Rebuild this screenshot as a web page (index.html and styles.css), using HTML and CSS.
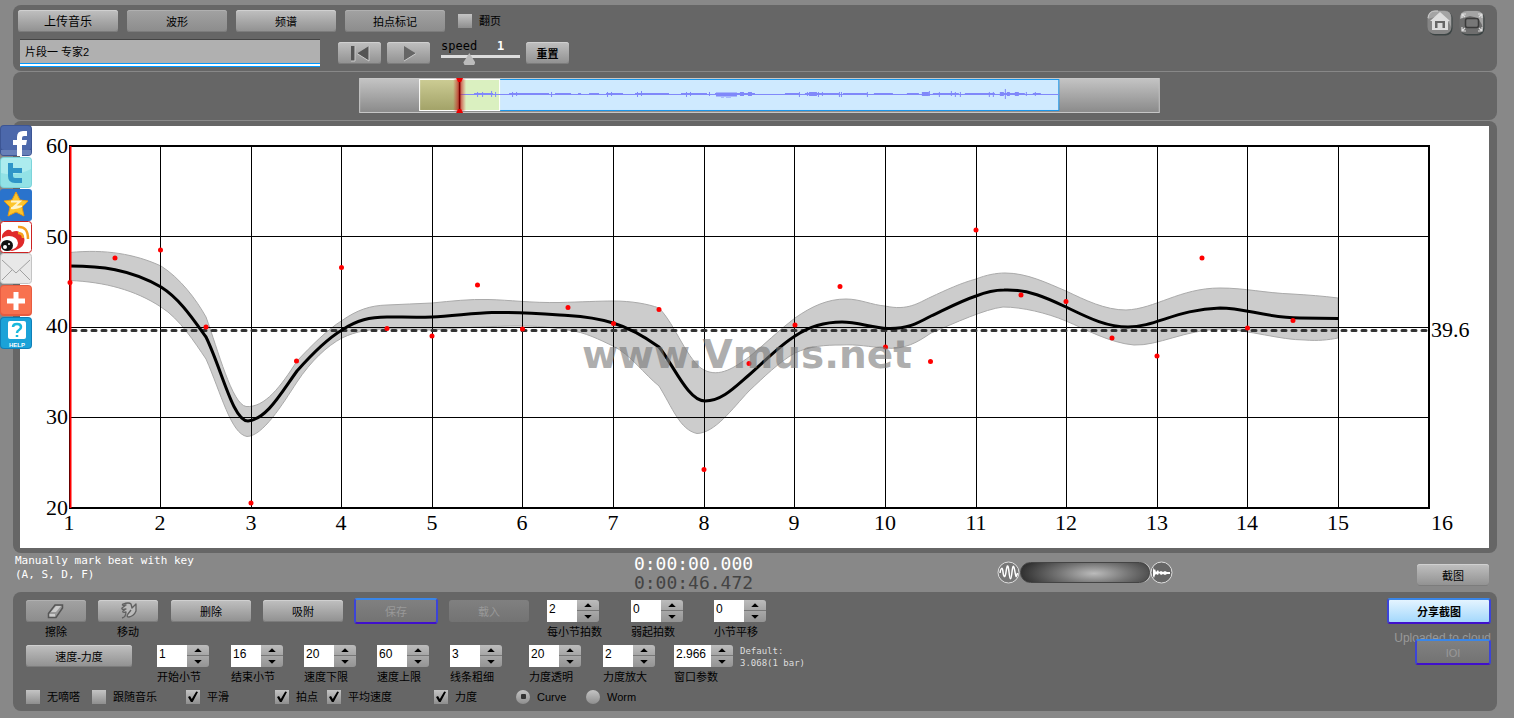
FILE: index.html
```html
<!DOCTYPE html>
<html lang="zh-CN">
<head>
<meta charset="utf-8">
<title>Vmus.net</title>
<link rel="stylesheet" href="styles.css">
</head>
<body>
<main class="app">
  <header class="panel toolbar">
    <div class="toolbar-main">
      <div class="row row-top">
        <button class="btn wide strong">上传音乐</button>
        <button class="btn wide dim">波形</button>
        <button class="btn wide">频谱</button>
        <button class="btn wide dim">拍点标记</button>
        <label class="check flip"><input type="checkbox"><span>翻页</span></label>
      </div>
      <div class="row row-play">
        <input class="title-input" type="text" aria-label="标题" value="片段一 专家2">
        <div class="transport">
          <button class="btn small" aria-label="返回开头"><svg width="24" height="17" viewBox="0 0 24 17"><path d="M3 1h4v15H3zM21 1v15L9 8.500z" fill="#555"/><path d="M7 1v15H3M21 1v15L9 8.500" fill="none" stroke="#ccc"/></svg></button>
          <button class="btn small" aria-label="播放"><svg width="24" height="17" viewBox="0 0 24 17"><path d="M7 1v15l12-7.500z" fill="#666"/><path d="M7 16l12-7.500" fill="none" stroke="#ccc"/></svg></button>
        </div>
        <div class="speed">
          <label for="speed">speed</label><output for="speed">1</output>
          <input id="speed" type="range" min="0" max="3" step="0.1" value="1">
        </div>
        <button class="btn small bold">重置</button>
      </div>
    </div>
    <nav class="tools">
      <a href="#" aria-label="主页"><svg width="26" height="26" viewBox="0 0 26 26"><rect x="1.500" y="1.500" width="24" height="24" rx="7" fill="#3c4444"/><rect x="0.500" y="0.500" width="24" height="23.500" rx="7" fill="#858585"/><path d="M1 9Q1 1 8 1h10Q24 1 24 8v9Q20 7 11 6z" fill="#a4a4a4"/><path d="M1 8Q2 1 8 1h3" fill="none" stroke="#ccc"/><path d="M13 2l10 9h-2v9H5v-9H3z" fill="#ddd"/><path d="M8 11h10v7h-2.500v-5h-5v5H8z" fill="#666"/></svg></a>
      <a href="#" aria-label="全屏"><svg width="26" height="26" viewBox="0 0 26 26"><rect x="1.500" y="1.500" width="24" height="24" rx="7" fill="#3c4444"/><rect x="0.500" y="0.500" width="24" height="23.500" rx="7" fill="#6e6e6e"/><path d="M1 9Q1 1 8 1h10Q24 1 24 8v11Q22 7 11 6z" fill="#a4a4a4"/><rect x="6.500" y="8.500" width="13" height="9" rx="2" fill="#777" stroke="#3a3a3a" stroke-width="1.500"/><path d="M3 8V4h4M3 4l3 3M19 4h4v4M23 4l-3 3M3 17v4h4M3 21l3-3M19 21h4v-4M23 21l-3-3" fill="none" stroke="#ddd" stroke-width="1.200"/></svg></a>
    </nav>
  </header>

  <section class="panel overview">
    <svg class="wave" viewBox="0 0 801 35" role="img" aria-label="波形概览">
      <defs>
        <linearGradient id="g1" x2="0" y2="1"><stop stop-color="#c4c4c4"/><stop offset="1" stop-color="#8a8a8a"/></linearGradient>
        <linearGradient id="g2" x2="0" y2="1"><stop stop-color="#cccc94"/><stop offset="1" stop-color="#a2a268"/></linearGradient>
        <linearGradient id="g3"><stop stop-color="#d22" stop-opacity="0"/><stop offset=".5" stop-color="#b11" stop-opacity=".8"/><stop offset="1" stop-color="#d22" stop-opacity="0"/></linearGradient>
      </defs>
      <rect x="0.500" y="0.500" width="800" height="34" fill="url(#g1)" stroke="#c8c8c8"/>
      <rect x="100" y="1.500" width="600" height="31" fill="#cfeaff" stroke="#1a95e8"/>
      <rect x="60.500" y="1.500" width="40" height="31" fill="url(#g2)"/>
      <rect x="100" y="1.500" width="41" height="31" fill="#daf0c0"/>
      <rect x="60.500" y="1.500" width="80" height="31" fill="none" stroke="#fff"/>
      <g fill="none" stroke="#8088fa">
        <path d="M101 16.500H700"/>
        <path d="M115 16H134M150 16H190M196 16H212M219 16H222M230 16H240M247 16H264M276 16H310M322 16H348M356 16H396M426 16H440M446 16H480M484 16H508M515 16H534M548 16H560M574 16H600M606 16H636M642 16H666M674 16H682" stroke-width="2"/>
        <path d="M118.500 14v5M123.500 14v5M132.500 13v6M136.500 14v5M153.500 14v5M157.500 14v4M192.500 14v5M248.500 14v5M252.500 14v4M278.500 14v5M282.500 13v5M327.500 14v5M331.500 14v4M350.500 14v4M440.500 14v5M448.500 14v4M459.500 14v5M463.500 14v4M480.500 14v5M482.500 14v5M508.500 14v5M580.500 14v5M592.500 13v5M596.500 14v5M601.500 14v5M630.500 14v5M634.500 14v5M667.500 14v4M676.500 14v4"/>
        <path d="M357 16.500H378M381 16H385M389 16H393M450 16H458M563 16H570M641 16H645M648 16H651M656 16H660" stroke-width="4"/>
        <path d="M362 19.500h3M367 19.500h5" stroke-opacity=".5"/>
        <path d="M646.500 11v10M570.500 13v5"/>
      </g>
      <rect x="94" y="1" width="13" height="32" fill="url(#g3)"/>
      <path d="M100.500 2v31" stroke="#700" stroke-width="1.500"/>
      <path d="M97 0h7l-2 4h-3zM97 35h7l-2-4h-3z" fill="#e00"/>
    </svg>
  </section>

  <section class="panel chart-panel">
    <svg class="chart" viewBox="20 126 1469 422" role="img" aria-label="速度曲线">
      <rect x="20" y="126" width="1469" height="422" fill="#fff"/>
      <path class="band" d="M70 252.500C105 249 135 254 161 266C180 278 196 299 206 317C218 350 232 404 246 406.500C265 408 281 386 297 361C312 345 327 330 342 320.500C357 310 370 305.500 387 305C402 304 417 304 432 303C452 301 470 299 488 299.500C510 300 530 303 560 302.500C580 302 600 301 613 301C632 301 648 304 659 308C675 324 688 362 704 370C720 378 735 367 749 357C764 345 779 330 795 318C812 306 828 299 846 299C860 299 872 305 885 306C908 311 918 303 931 297C946 290 961 283 976 279C986 275 996 273 1005 273C1027 273 1047 283 1066 291C1085 300 1105 310 1126 310C1155 309 1180 288 1220 288C1245 288 1265 293 1292 294C1308 295 1323 296 1338 298V338C1328 340 1318 341 1305 340C1280 340 1250 330 1220 329C1185 330 1158 346 1134 345C1110 343 1085 329 1066 321C1047 313 1022 307 1003 307C985 309 955 323 931 333C918 342 905 350 885 348C870 347 857 344 841 345C825 345 810 346 795 353C779 362 764 377 749 391C732 409 715 433 697 433.500C680 430 672 407 659 386C645 375 630 354 613 346C600 340 585 332 568 330C550 327 535 326 522 326C490 326 455 328 432 330C405 330 370 324 342 338C327 346 311 361 297 382C282 405 263 436 247 436.500C231 434 221 393 206 359C195 343 180 319 161 307C135 290 105 282 70 280.500Z"/>
      <path class="grid" d="M160.500 146V508M251.500 146V508M341.500 146V508M432.500 146V508M522.500 146V508M613.500 146V508M704.500 146V508M794.500 146V508M885.500 146V508M976.500 146V508M1066.500 146V508M1157.500 146V508M1247.500 146V508M1338.500 146V508M70 236.500H1429M70 327.500H1429M70 417.500H1429"/>
      <path class="mean" d="M72 330.500H1428"/>
      <path class="curve" d="M70 266C100 266 130 269 161 287C180 299 193 319 206 337C222 370 233 421 248 421C267 419 281 393 297 371C312 354 327 339 342 330C357 320 370 317 387 317C402 317 417 317.500 432 317C452 316 475 313 492 312.500C520 312 545 314 568 315.500C585 316.500 600 319 613 323C630 328 645 337 659 347C673 364 688 401 705 401C722 401 735 387 749 375C764 362 779 346 795 336C810 326 825 322 842 322C858 322 872 328 888 328.500C908 329 918 323 931 316C946 309 961 301 976 296C986 292 996 290 1004 290C1028 289 1047 298 1066 307C1085 316 1105 327 1128 327C1155 327 1178 309 1220 308C1245 308 1265 317.500 1300 318L1338 318.500"/>
      <path class="frame" d="M69 146H1429V508H69"/>
      <path d="M70.500 146V508" stroke="#f00" stroke-width="2"/>
      <path d="M69.500 146V508" stroke="#600"/>
      <path class="dots" d="M70 282.500h0M115 258h0M160.500 250h0M206 327h0M251 503h0M296.500 361h0M341.500 267.500h0M387 328.500h0M432 336h0M477.500 285h0M522.500 329h0M568 307.500h0M613.500 323.500h0M659 309.500h0M704 469.500h0M749 363.500h0M795 325h0M840 286.500h0M885.500 347h0M930.500 361.500h0M976 230h0M1021 295h0M1066 301.500h0M1112 338h0M1157 356h0M1202 258h0M1247.500 328h0M1293 320.500h0"/>
      <text class="watermark" x="747" y="368">www.Vmus.net</text>
      <g class="axis y-axis">
        <text x="68" y="153">60</text><text x="68" y="244">50</text><text x="68" y="333">40</text><text x="68" y="424">30</text><text x="68" y="515">20</text>
      </g>
      <g class="axis x-axis">
        <text x="69" y="530">1</text><text x="160" y="530">2</text><text x="251" y="530">3</text><text x="341" y="530">4</text><text x="432" y="530">5</text><text x="522" y="530">6</text><text x="613" y="530">7</text><text x="704" y="530">8</text><text x="794" y="530">9</text><text x="885" y="530">10</text><text x="976" y="530">11</text><text x="1066" y="530">12</text><text x="1157" y="530">13</text><text x="1247" y="530">14</text><text x="1338" y="530">15</text><text x="1442" y="530">16</text>
      </g>
      <text class="axis" x="1431" y="337">39.6</text>
    </svg>
  </section>

  <section class="status">
    <p class="hint">Manually mark beat with key<br>(A, S, D, F)</p>
    <div class="clock"><div>0:00:00.000</div><div class="total">0:00:46.472</div></div>
    <div class="zoomer">
      <svg width="23" height="23" viewBox="0 0 23 23"><circle cx="11.500" cy="11.500" r="10.500" fill="#777" stroke="#ddd"/><path d="M3 12C4 6 5.500 6 6 11S8 18 9 11 11 2 12 11 14 20 15 11 17 5 18 11 19 17 20.500 12" fill="none" stroke="#fff" stroke-width="1.500"/></svg>
      <input class="pill" type="range" aria-label="缩放">
      <svg width="23" height="23" viewBox="0 0 23 23"><circle cx="11.500" cy="11.500" r="10.500" fill="#666" stroke="#ddd"/><path d="M3 6l1 3 1-1 1 3 2-2 1 2 2-1 2 1 2-1 2 1h3v2h-3l-2 1-2-1-2 1-2-2-1 2-2-1-1 1-1 3-1-2z" fill="#fff"/></svg>
    </div>
    <button class="btn capture">截图</button>
  </section>

  <section class="panel controls">
    <div class="settings">
      <div class="line line-a">
        <div class="field icon-field"><button class="btn w60 dim" aria-labelledby="l-erase"><svg width="20" height="18" viewBox="0 0 20 18"><path d="M2.500 11.500L9 3h7.500v3L10 15.500H2.500z" fill="#999" stroke="#555" stroke-width="1.500"/><path d="M5 10l5-6h5l-5 6z" fill="#ccc"/><path d="M3.500 12H9v2.500H3.500z" fill="#ccc"/></svg></button><span id="l-erase">擦除</span></div>
        <div class="field icon-field"><button class="btn w60" aria-labelledby="l-move"><svg width="20" height="18" viewBox="0 0 20 18"><path d="M4 16q4-1 4-6-4 1-3-1l3-2Q3 8 4 6l4-3Q3 4 5 2q6-2 8 0l1 4 4-4v7q-2 5-7 6-3 0-1-3l3-4" fill="#bbb" stroke="#606060" stroke-width="1.300" stroke-linejoin="round"/></svg></button><span id="l-move">移动</span></div>
        <button class="btn w80">删除</button>
        <button class="btn w80">吸附</button>
        <button class="btn w80 ring disabled" disabled>保存</button>
        <button class="btn w80 disabled" disabled>载入</button>
        <div class="field"><div class="spin"><input id="beats" type="text" value="2"><div><button aria-label="增加"></button><button aria-label="减少"></button></div></div><label for="beats">每小节拍数</label></div>
        <div class="field"><div class="spin"><input id="pickup" type="text" value="0"><div><button aria-label="增加"></button><button aria-label="减少"></button></div></div><label for="pickup">弱起拍数</label></div>
        <div class="field"><div class="spin"><input id="shift" type="text" value="0"><div><button aria-label="增加"></button><button aria-label="减少"></button></div></div><label for="shift">小节平移</label></div>
      </div>
      <div class="line line-b">
        <button class="btn w106">速度-力度</button>
        <div class="field"><div class="spin"><input id="start" type="text" value="1"><div><button aria-label="增加"></button><button aria-label="减少"></button></div></div><label for="start">开始小节</label></div>
        <div class="field"><div class="spin"><input id="end" type="text" value="16"><div><button aria-label="增加"></button><button aria-label="减少"></button></div></div><label for="end">结束小节</label></div>
        <div class="field"><div class="spin"><input id="low" type="text" value="20"><div><button aria-label="增加"></button><button aria-label="减少"></button></div></div><label for="low">速度下限</label></div>
        <div class="field"><div class="spin"><input id="high" type="text" value="60"><div><button aria-label="增加"></button><button aria-label="减少"></button></div></div><label for="high">速度上限</label></div>
        <div class="field"><div class="spin"><input id="stroke" type="text" value="3"><div><button aria-label="增加"></button><button aria-label="减少"></button></div></div><label for="stroke">线条粗细</label></div>
        <div class="field"><div class="spin"><input id="alpha" type="text" value="20"><div><button aria-label="增加"></button><button aria-label="减少"></button></div></div><label for="alpha">力度透明</label></div>
        <div class="field"><div class="spin"><input id="gain" type="text" value="2"><div><button aria-label="增加"></button><button aria-label="减少"></button></div></div><label for="gain">力度放大</label></div>
        <div class="field"><div class="spin long"><input id="win" type="text" value="2.966"><div><button aria-label="增加"></button><button aria-label="减少"></button></div></div><label for="win">窗口参数</label></div>
        <p class="default">Default:<br>3.068(1 bar)</p>
      </div>
      <div class="line line-c">
        <label class="check"><input type="checkbox"><span>无嘀嗒</span></label>
        <label class="check"><input type="checkbox"><span>跟随音乐</span></label>
        <label class="check"><input type="checkbox" checked><span>平滑</span></label>
        <label class="check"><input type="checkbox" checked><span>拍点</span></label>
        <label class="check"><input type="checkbox" checked><span>平均速度</span></label>
        <label class="check"><input type="checkbox" checked><span>力度</span></label>
        <label class="check"><input type="radio" name="mode" checked><span>Curve</span></label>
        <label class="check"><input type="radio" name="mode"><span>Worm</span></label>
      </div>
    </div>
    <div class="share">
      <button class="btn ring primary">分享截图</button>
      <p>Uploaded to cloud</p>
      <button class="btn ring ioi disabled" disabled>IOI</button>
    </div>
  </section>

  <nav class="social">
    <a href="#" aria-label="Facebook"><svg viewBox="0 0 32 32"><rect width="32" height="31" rx="4" fill="#3c5594"/><rect x="1" y="1" width="30" height="24" rx="3" fill="#4c68ab"/><path d="M1 25h30v3q0 2-2 2H3q-2 0-2-2z" fill="#6880b8"/><path d="M17 31V20h-4v-5h4v-3q0-6 6-6h4v5h-3q-2 0-2 2v2h5l-1 5h-4v11z" fill="#fff"/></svg></a>
    <a href="#" aria-label="Twitter"><svg viewBox="0 0 32 32"><rect width="32" height="31" rx="4" fill="#7cd4da"/><rect x="1" y="1" width="30" height="29" rx="3" fill="#92e2e6"/><path d="M1 16Q16 20 31 12V4q0-3-3-3H4Q1 1 1 4z" fill="#acecee"/><path d="M8 6h5v5h9v5h-9v3q0 2 2 2h7v5h-7q-7 0-7-7z" fill="#2f96c8"/></svg></a>
    <a href="#" aria-label="QQ空间"><svg viewBox="0 0 32 32"><rect width="32" height="32" rx="3" fill="#2a73cc"/><path d="M16 3l4 8 8 1-6 6 2 9-8-4-8 4 2-9-6-6 8-1z" fill="#fdc52c" stroke="#e99a10"/><path d="M11 12.500h9l-6 5h7M11 19q5 1 11-2" fill="none" stroke="#fff4cc" stroke-width="1.800"/></svg></a>
    <a href="#" aria-label="微博"><svg viewBox="0 0 32 32"><rect x=".5" y=".5" width="31" height="31" rx="3" fill="#fff" stroke="#c22"/><path d="M2 18Q1 12 7 9q4-1 5 2 7-3 8 2 6 3 4 9-2 6-12 8Q3 29 2 18z" fill="#e02a2a"/><ellipse cx="9" cy="22" rx="9" ry="7" fill="#fff"/><ellipse cx="7" cy="24.500" rx="6" ry="5.500" fill="#111"/><circle cx="5" cy="26" r="2" fill="#fff"/><circle cx="9" cy="23" r="1" fill="#fff"/><path d="M18 6q10-1 10 12M18 12q5 0 5 5" fill="none" stroke="#f5a020" stroke-width="2.500"/></svg></a>
    <a href="#" aria-label="邮件"><svg viewBox="0 0 32 32"><rect x=".5" y=".5" width="31" height="30" rx="3" fill="#e8e8e8" stroke="#c4c4c4"/><path d="M2 7l14 13L30 7M2 27l10-10M30 27L20 17" fill="none" stroke="#a0a0a0"/></svg></a>
    <a href="#" aria-label="更多"><svg viewBox="0 0 32 32"><rect width="32" height="31" rx="4" fill="#e85c40"/><rect x="1" y="1" width="30" height="28" rx="3" fill="#f8714f"/><path d="M13.500 7h5v6.500H25v5h-6.500V25h-5v-6.500H7v-5h6.500z" fill="#fff"/></svg></a>
    <a href="#" aria-label="帮助"><svg viewBox="0 0 32 32"><rect width="32" height="32" rx="4" fill="#0f7fb8"/><rect x="1" y="1" width="30" height="30" rx="3" fill="#1ba2d8"/><rect x="8" y="4" width="18" height="18" rx="2" fill="#fff"/><path d="M13 10q0-3 4-3t4 3q0 2-2 3t-2 3M17 18v2" fill="none" stroke="#18b8dc" stroke-width="2.500"/><text x="17" y="30" class="help">HELP</text></svg></a>
  </nav>
</main>
</body>
</html>
```
FILE: styles.css
```css
* { box-sizing: border-box; }

body {
  margin: 0;
  background: #888;
  color: #000;
  font: 11px/14px "Liberation Sans", "Noto Sans CJK SC", sans-serif;
}

p { margin: 0; }
button, input { font: inherit; color: inherit; margin: 0; padding: 0; }
svg { display: block; }

.app {
  position: relative;
  display: flex;
  flex-direction: column;
  gap: 1px;
  padding: 5px 17px 7px 13px;
}

.panel { background: #666; border-radius: 8px; }

.btn {
  display: flex;
  align-items: center;
  justify-content: center;
  height: 22px;
  padding-top: 2px;
  border: 0;
  border-radius: 3px;
  background: linear-gradient(#c0c0c0, #909090);
  box-shadow: inset 0 1px 0 #d0d0d0, inset 0 -1px 0 #7c7c7c;
}
.dim { background: linear-gradient(#a2a2a2, #8c8c8c); box-shadow: inset 0 1px 0 #b0b0b0, inset 0 -1px 0 #7c7c7c; }
.disabled { background: linear-gradient(#808080, #737373); color: #999; box-shadow: none; }
.wide { width: 100px; }
.small { width: 43px; }
.w60 { width: 60px; }
.w80 { width: 80px; }
.w106 { width: 106px; }
.strong { font-size: 12px; }
.bold { font-weight: bold; }

.ring {
  height: 26px;
  margin: -2px;
  border: 2px solid;
  border-color: #3a86e8 #3c44d8 #4010cc #3c44d8;
}
.w80.ring { width: 84px; }

.toolbar { display: flex; justify-content: space-between; padding: 5px 12px 4px 5px; }
.toolbar-main { display: flex; flex-direction: column; gap: 7px; }
.row { display: flex; align-items: center; }
.row-top { gap: 9px; }
.row-play { padding-left: 2px; }
.flip { margin-left: 4px; }

.title-input {
  width: 300px;
  height: 28px;
  padding: 0 5px 4px;
  border: 0;
  border-top: 1px solid #444;
  border-bottom: 1px solid #09f;
  background: #b0b0b0;
  box-shadow: inset 0 -2px 0 #fff, inset 0 -3px 0 #09f;
}
.transport { display: flex; gap: 6px; margin: 0 11px 0 18px; }
.transport .btn { padding: 0; }

.speed {
  display: grid;
  grid-template-columns: 1fr 23px;
  width: 79px;
  margin-right: 6px;
  font: 12px/12px "DejaVu Sans Mono", monospace;
}
.speed output { color: #fff; font-weight: bold; }
.speed input {
  grid-column: 1 / 3;
  appearance: none;
  width: 100%;
  height: 14px;
  background: linear-gradient(transparent 3px, #ddd 3px, #ddd 6px, transparent 6px);
}
.speed input::-webkit-slider-thumb {
  appearance: none;
  width: 12px;
  height: 12px;
  background: #bbb;
  clip-path: polygon(50% 0, 100% 80%, 90% 100%, 10% 100%, 0 80%);
}

.tools { display: flex; gap: 6px; }

.overview { padding: 6px 0 7px 9px; }
.wave { width: 54.3%; margin: 0 auto; }

.chart-panel { padding: 5px 8px 5px 7px; margin-bottom: -1px; }
.chart { width: 100%; }
.band { fill: #ccc; stroke: #aaa; }
.grid { fill: none; stroke: #000; }
.mean { stroke: #333; stroke-width: 3; stroke-dasharray: 4 6; stroke-linecap: round; }
.curve { fill: none; stroke: #000; stroke-width: 3; }
.frame { fill: none; stroke: #000; stroke-width: 2; }
.dots { fill: none; stroke: #f00; stroke-width: 5; stroke-linecap: round; }
.watermark { font: bold 39px "DejaVu Sans", sans-serif; text-anchor: middle; fill: #777; fill-opacity: .6; }
.axis { font: 22px "Liberation Serif", serif; }
.y-axis { text-anchor: end; }
.x-axis { text-anchor: middle; }

.status {
  display: flex;
  justify-content: space-between;
  align-items: center;
  padding: 1px 8px 0 2px;
  min-height: 39px;
}
.hint { width: 375px; align-self: flex-start; color: #fff; font: 11px/14px "DejaVu Sans Mono", monospace; }
.clock { color: #fff; font: 18px/19px "DejaVu Sans Mono", monospace; }
.total { color: #444; }
.zoomer { display: flex; align-items: center; }
.pill {
  appearance: none;
  width: 130px;
  height: 21px;
  border: 1px solid #444;
  border-radius: 11px;
  background: radial-gradient(ellipse 76px 22px at 57% 55%, #bbb, #777 45%, #2c2c2c);
  box-shadow: 1px 0 0 #ccc;
}
.pill::-webkit-slider-thumb { appearance: none; width: 1px; height: 1px; }
.capture { width: 72px; margin-top: 4px; }

.controls { display: flex; justify-content: space-between; margin-top: -1px; padding: 8px 8px 7px 13px; }
.settings { display: flex; flex-direction: column; gap: 6px; }
.line { display: grid; align-items: start; }
.line-a { grid-template-columns: 72px 73px 92px 93px 93px 98px 84px 83px auto; }
.line-b { grid-template-columns: 131px 74px 73px 73px 73px 79px 74px 71px 66px auto; }
.line-c { grid-template-columns: 66px 94px 89px 52px 107px 82px 70px auto; }

.field { display: flex; flex-direction: column; gap: 3px; white-space: nowrap; }
.icon-field > span { width: 60px; text-align: center; }
.icon-field .btn { padding: 0; }

.spin { display: flex; width: 52px; height: 22px; }
.spin.long { width: 59px; }
.spin input {
  flex: 1;
  min-width: 0;
  padding: 0 2px 4px;
  border: 0;
  background: #fff;
  font-size: 12px;
}
.spin div { display: flex; flex-direction: column; gap: 1px; width: 22px; background: #777; border-radius: 0 3px 3px 0; }
.spin button {
  display: grid;
  place-items: center;
  flex: 1;
  min-height: 0;
  border: 0;
  border-radius: 0 3px 0 0;
  background: linear-gradient(#bcbcbc, #a6a6a6);
}
.spin button + button { border-radius: 0 0 3px; background: linear-gradient(#a8a8a8, #949494); }
.spin button::before { content: ""; width: 8px; height: 4px; background: #000; clip-path: polygon(50% 0, 100% 100%, 0 100%); }
.spin button + button::before { clip-path: polygon(0 0, 100% 0, 50% 100%); }

.default { color: #ddd; font: 9px/12px "DejaVu Sans Mono", monospace; }

.check { display: flex; align-items: center; gap: 7px; white-space: nowrap; }
.check input {
  appearance: none;
  display: grid;
  place-items: center;
  width: 14px;
  height: 14px;
  background: linear-gradient(#c4c4c4, #8e8e8e);
}
.check input[type="radio"] { border-radius: 50%; }
.check input[type="checkbox"]:checked::before {
  content: "";
  width: 10px;
  height: 11px;
  background: #000;
  clip-path: polygon(0 50%, 20% 42%, 38% 68%, 82% 0, 100% 4%, 44% 100%, 32% 100%);
}
.check input[type="radio"]:checked::before { content: ""; width: 5px; height: 5px; border-radius: 1px; background: #333; }

.share { display: flex; flex-direction: column; align-items: flex-end; color: #999; }
.primary { width: 104px; color: #000; font-weight: bold; background: linear-gradient(#e4f4ff, #a4d8fc); box-shadow: none; }
.share p { margin: 9px -2px 0 0; font-size: 12px; }
.share .ioi { width: 76px; margin-top: -6px; }

.social { position: absolute; left: 0; top: 125px; width: 32px; }
.social a { display: block; height: 32px; }
.help { font: bold 6px "Liberation Sans", sans-serif; text-anchor: middle; fill: #fff; }
```
